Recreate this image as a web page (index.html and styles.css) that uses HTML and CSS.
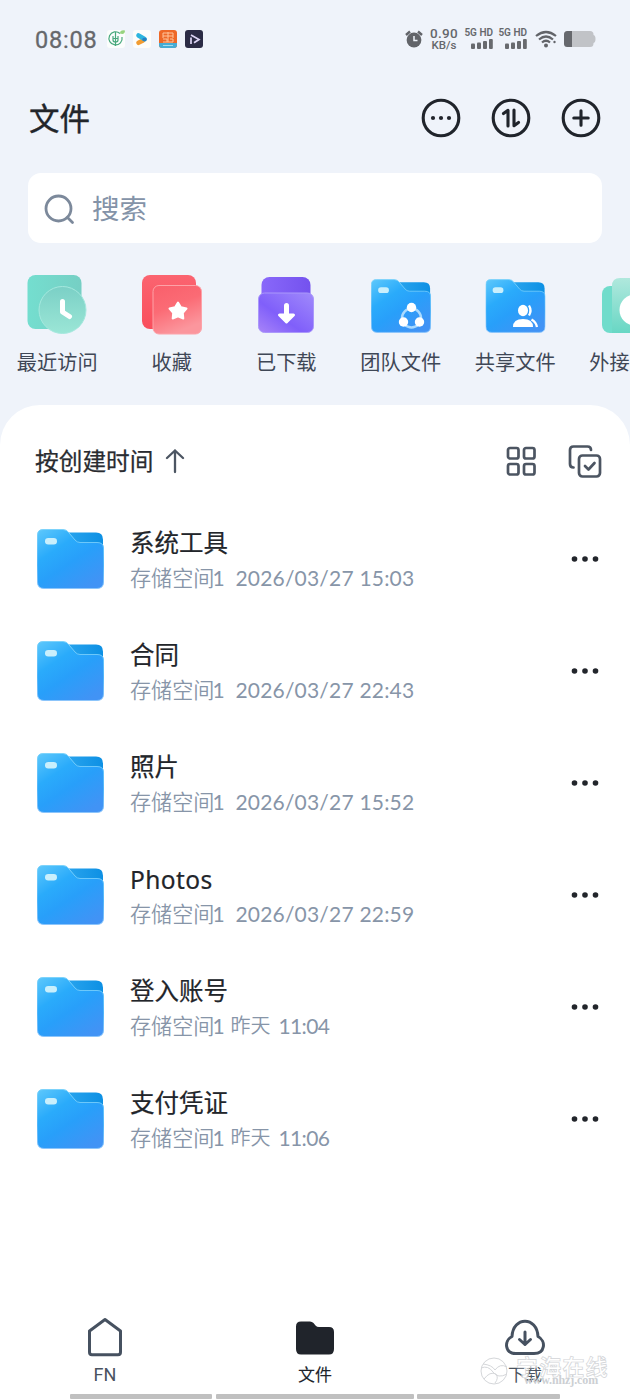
FILE: index.html
```html
<!DOCTYPE html>
<html lang="zh-CN">
<head>
<meta charset="utf-8">
<title>文件</title>
<link rel="stylesheet" href="styles.css">
</head>
<body>
<svg class="defs" width="0" height="0">
  <defs>
    <linearGradient id="front" x1="0" y1="0" x2=".75" y2="1"><stop offset="0" stop-color="#5ec8fb"/><stop offset=".35" stop-color="#2aabfb"/><stop offset=".6" stop-color="#289ffa"/><stop offset="1" stop-color="#4193f5"/></linearGradient>
    <linearGradient id="edge" x1="0" y1="0" x2="0" y2="1"><stop offset="0" stop-color="#7dd3fb"/><stop offset=".6" stop-color="#50b5fa"/><stop offset="1" stop-color="#8cc5fb"/></linearGradient>
    <linearGradient id="back" x1="0" y1="0" x2="1" y2="0"><stop offset="0" stop-color="#2aa5ee"/><stop offset="1" stop-color="#0d90e4"/></linearGradient>
    <linearGradient id="teal" x1="0" y1="0" x2="1" y2="0"><stop offset="0" stop-color="#74decf"/><stop offset="1" stop-color="#76cfc4"/></linearGradient>
    <linearGradient id="mint" x1="0" y1="0" x2="0" y2="1"><stop offset="0" stop-color="#7bd0c6"/><stop offset="1" stop-color="#9be6d6"/></linearGradient>
    <linearGradient id="red" x1="0" y1="0" x2="0" y2="1"><stop offset="0" stop-color="#fb6470"/><stop offset="1" stop-color="#f94e5c"/></linearGradient>
    <linearGradient id="pink" x1="0" y1="0" x2=".4" y2="1"><stop offset="0" stop-color="#f95f6b"/><stop offset=".5" stop-color="#fb6b75"/><stop offset="1" stop-color="#fb969d"/></linearGradient>
    <linearGradient id="violet" x1="0" y1="0" x2="1" y2="0"><stop offset="0" stop-color="#8968fa"/><stop offset="1" stop-color="#7452ee"/></linearGradient>
    <linearGradient id="lilac" x1="0" y1="1" x2="1" y2="0"><stop offset="0" stop-color="#a884f8"/><stop offset=".4" stop-color="#805ffa"/><stop offset="1" stop-color="#a08afb"/></linearGradient>
    <linearGradient id="drive" x1="0" y1="0" x2="0" y2="1"><stop offset="0" stop-color="#b0e8dd"/><stop offset="1" stop-color="#68d7c4"/></linearGradient>
    <symbol id="folder" viewBox="0 0 67 60">
      <path d="M28 3.500H59Q66 3.500 66 10.500V25H28Z" fill="url(#back)"/>
      <path d="M6 .5H26Q29.500 .5 31.500 3.300L38 11Q40 13.500 43 13.500H60Q66.500 13.500 66.500 19V53Q66.500 59.500 60 59.500H7Q.5 59.500 .5 53V6Q.5 .5 6 .5Z" fill="url(#front)" stroke="url(#edge)"/>
      <rect x="8" y="9" width="12" height="6.500" rx="3.200" fill="#c9effc"/>
    </symbol>
    <symbol id="more" viewBox="0 0 28 8"><g fill="#22252b"><circle cx="3.500" cy="4" r="2.800"/><circle cx="14" cy="4" r="2.800"/><circle cx="24.500" cy="4" r="2.800"/></g></symbol>
    <symbol id="signal" viewBox="0 0 22 10"><g fill="#686a6e"><rect y="4.500" width="4" height="5.500" rx="1"/><rect x="6" y="3.500" width="4" height="6.500" rx="1"/><rect x="12" y="2" width="4" height="8" rx="1"/><rect x="18" width="3.800" height="10" rx="1"/></g></symbol>
  </defs>
</svg>
<div class="phone">
  <header class="status">
    <time class="clock">08:08</time>
    <svg class="apps" width="98" height="20" viewBox="0 0 98 20">
      <rect x="0" y="1" width="18" height="18" rx="3" fill="#fbfdfc"/>
      <g fill="none" stroke="#48a97d" stroke-width="1.200"><path d="M13 4.500A6.600 6.600 0 1 0 15 8"/><path d="M8.500 3V8M6 7v4q0 2 2.500 2t2.500-2V7M8.500 8v9M6 9.500h5"/></g>
      <path d="M13 4.500q0-4 5-3Q18 6 13 4.500Z" fill="#97d47f"/>
      <rect x="26" y="1" width="18" height="18" rx="3" fill="#fdfdfb"/>
      <path d="M31.500 13.800 36 11.500" stroke="#f29c31" stroke-width="4.600" stroke-linecap="round"/><path d="M31.500 6.500 37.500 10" stroke="#2eb5df" stroke-width="4.600" stroke-linecap="round"/><path d="M37 10.500H38" stroke="#2881c2" stroke-width="3.500" stroke-linecap="round"/>
      <rect x="52" y="1" width="18" height="18" rx="3" fill="#ee6827"/><path d="M52 14h18v2q0 3-3 3H55q-3 0-3-3Z" fill="#45acd5"/>
      <path d="M56 4h10M56 7h10M56 4v5M61 3v10M66 4v5M56 10h4v3M63 10h3v3M56 13h10" stroke="#ffc39a" fill="none"/><path d="M56 16.500h10" stroke="#a3dced"/>
      <rect x="78" y="1" width="18" height="18" rx="3" fill="#2b2b45"/><path d="M84 15V8.500M84 6 92 10.500 87 13.800" stroke="#ddd5f5" stroke-width="1.700" fill="none"/>
    </svg>
    <span class="spacer"></span>
    <svg class="alarm" width="18" height="18" viewBox="0 0 18 18"><circle cx="9" cy="10" r="7.400" fill="#626469"/><path d="M1 5 5 1.500M17 5 13 1.500" stroke="#626469" stroke-width="2.400"/><path d="M9 6v4.500h3.500" fill="none" stroke="#eff3fa" stroke-width="1.500"/></svg>
    <div class="speed"><b>0.90</b><span>KB/s</span></div>
    <div class="sim"><span>5G HD</span><svg width="22" height="10"><use href="#signal"/></svg></div>
    <div class="sim second"><span>5G HD</span><svg width="22" height="10"><use href="#signal"/></svg></div>
    <svg class="wifi" width="22" height="18" viewBox="0 0 22 18"><g fill="none" stroke="#626469" stroke-width="2.200"><path d="M1 6Q11-2 21 6M4 9.500Q11 3.500 18 9.500M7 12.500q4-3.500 8 0"/></g><circle cx="11" cy="15.500" r="2" fill="#626469"/><circle cx="19.500" cy="12" r="1.200" fill="#626469"/></svg>
    <svg class="battery" width="32" height="16" viewBox="0 0 32 16"><rect width="29.500" height="16" rx="3.500" fill="#c1c3c7"/><path d="M29 4q2.500 0 2.500 4T29 12Z" fill="#c1c3c7"/><path d="M8 0H3.500Q0 0 0 3.500v9Q0 16 3.500 16H8Z" fill="#66686d"/></svg>
  </header>
  <div class="heading">
    <h1>文件</h1>
    <div class="actions">
      <svg width="40" height="40" viewBox="0 0 40 40"><circle cx="20" cy="20" r="17.800"/><g class="solid"><circle cx="12" cy="20" r="2.100"/><circle cx="20" cy="20" r="2.100"/><circle cx="28" cy="20" r="2.100"/></g></svg>
      <svg width="40" height="40" viewBox="0 0 40 40"><circle cx="20" cy="20" r="17.800"/><path d="M12.500 15.500 17 12.300V28M23 12V27.700L27.500 24.500"/></svg>
      <svg width="40" height="40" viewBox="0 0 40 40"><circle cx="20" cy="20" r="17.800"/><path d="M12.800 20H27.200M20 12.800V27.200"/></svg>
    </div>
  </div>
  <div class="search"><svg width="32" height="32" viewBox="0 0 32 32"><circle cx="14.500" cy="15.500" r="12.500"/><path d="M23.500 24.500 28.500 29.500"/></svg><span>搜索</span></div>
  <nav class="shortcuts">
    <div class="shortcut"><svg width="62" height="62" viewBox="0 0 62 62"><rect x="1.500" y="1" width="54" height="54" rx="8" fill="url(#teal)"/><circle cx="36.500" cy="36" r="23.500" fill="url(#mint)" stroke="#a5e8de"/><path d="M36.500 27.500V38L43.500 42.500" fill="none" stroke="#fff" stroke-width="5" stroke-linecap="round" stroke-linejoin="round"/></svg><span>最近访问</span></div>
    <div class="shortcut"><svg width="62" height="62" viewBox="0 0 62 62"><rect x="1" y="1" width="54" height="54" rx="8" fill="url(#red)"/><rect x="12" y="11.500" width="48.500" height="48.500" rx="6" fill="url(#pink)" stroke="#fda2a8"/><path d="M37 28.500 39.900 33.300 45.500 34.500 41.800 38.900 42.300 44.500 37 42.400 31.700 44.500 32.200 38.900 28.500 34.500 34.100 33.300Z" fill="#fff" stroke="#fff" stroke-width="2" stroke-linejoin="round"/></svg><span>收藏</span></div>
    <div class="shortcut"><svg width="62" height="62" viewBox="0 0 62 62"><rect x="6.500" y="3" width="49" height="35" rx="8" fill="url(#violet)"/><rect x="3.500" y="19" width="55" height="39.500" rx="6" fill="url(#lilac)" stroke="#aa98fb"/><path d="M31.500 31.500V42" stroke="#fff" stroke-width="5" stroke-linecap="round"/><path d="M24.500 41H38.500L31.500 48Z" fill="#fff" stroke="#fff" stroke-width="3" stroke-linejoin="round"/></svg><span>已下载</span></div>
    <div class="shortcut"><svg width="62" height="62" viewBox="0 0 62 62"><use href="#folder" x="1" y="5" width="60" height="54"/><circle cx="41.500" cy="44" r="9.500" fill="none" stroke="#a9daff" stroke-width="2.500"/><g fill="#fff"><circle cx="41.500" cy="33.500" r="4.700"/><circle cx="33.500" cy="48" r="4.700"/><circle cx="49.500" cy="48" r="4.700"/></g></svg><span>团队文件</span></div>
    <div class="shortcut"><svg width="62" height="62" viewBox="0 0 62 62"><use href="#folder" x="1.500" y="5" width="60" height="54"/><g fill="#fff"><ellipse cx="39" cy="36.500" rx="5" ry="5.800"/><path d="M29 53Q29 45 39 45T49 53Z"/></g><path d="M45 31.500q3 5 0 10M47.500 45.500Q52 48 53 53" fill="none" stroke="#fff" stroke-width="2.300"/></svg><span>共享文件</span></div>
    <div class="shortcut"><svg width="62" height="62" viewBox="0 0 62 62"><rect x="3" y="12" width="50" height="47" rx="8" fill="#70dccb"/><path d="M13 59V12Q13 4 21 4H60V59Z" fill="url(#drive)"/><circle cx="36" cy="36" r="15.500" fill="#fff"/></svg><span>外接存储</span></div>
  </nav>
  <main class="sheet">
    <div class="sort"><strong>按创建时间</strong><svg class="up" width="20" height="26" viewBox="0 0 20 26"><path d="M10 23V1.500M2 9 10 1.500 18 9"/></svg><span class="spacer"></span>
      <svg class="grid" width="31" height="31" viewBox="0 0 31 31"><rect x="2" y="2" width="10.500" height="10.500" rx="2"/><rect x="18" y="2" width="10.500" height="10.500" rx="2"/><rect x="2" y="18" width="10.500" height="10.500" rx="2"/><rect x="18" y="18" width="10.500" height="10.500" rx="2"/></svg>
      <svg class="select" width="34" height="34" viewBox="0 0 34 34"><path d="M5.500 22.500Q2 22.500 2 19V5Q2 1.500 5.500 1.500H19.500Q23 1.500 23 5"/><rect x="11" y="10.500" width="21" height="21" rx="3.500"/><path d="M17 21 20.500 24.500 26.500 18"/></svg></div>
    <ul class="files">
      <li><svg class="folder" width="67" height="60"><use href="#folder"/></svg><div class="info"><h2>系统工具</h2><p>存储空间<i>1</i><time class="date">2026/03/27 15:03</time></p></div><svg class="more" width="28" height="8"><use href="#more"/></svg></li>
      <li><svg class="folder" width="67" height="60"><use href="#folder"/></svg><div class="info"><h2>合同</h2><p>存储空间<i>1</i><time class="date">2026/03/27 22:43</time></p></div><svg class="more" width="28" height="8"><use href="#more"/></svg></li>
      <li><svg class="folder" width="67" height="60"><use href="#folder"/></svg><div class="info"><h2>照片</h2><p>存储空间<i>1</i><time class="date">2026/03/27 15:52</time></p></div><svg class="more" width="28" height="8"><use href="#more"/></svg></li>
      <li><svg class="folder" width="67" height="60"><use href="#folder"/></svg><div class="info"><h2 class="latin">Photos</h2><p>存储空间<i>1</i><time class="date">2026/03/27 22:59</time></p></div><svg class="more" width="28" height="8"><use href="#more"/></svg></li>
      <li><svg class="folder" width="67" height="60"><use href="#folder"/></svg><div class="info"><h2>登入账号</h2><p>存储空间<i>1</i><span class="day">昨天</span><time class="hour">11:04</time></p></div><svg class="more" width="28" height="8"><use href="#more"/></svg></li>
      <li><svg class="folder" width="67" height="60"><use href="#folder"/></svg><div class="info"><h2>支付凭证</h2><p>存储空间<i>1</i><span class="day">昨天</span><time class="hour">11:06</time></p></div><svg class="more" width="28" height="8"><use href="#more"/></svg></li>
    </ul>
  </main>
  <nav class="tabs">
    <div class="tab"><svg width="42" height="42" viewBox="0 0 42 42"><path class="line" d="M21 3.500 36.500 15V36Q36.500 38.800 34 38.800H8Q5.500 38.800 5.500 36V15Z"/></svg><span class="fn">FN</span></div>
    <div class="tab active"><svg width="42" height="42" viewBox="0 0 42 42"><path d="M7 5.500H16Q18 5.500 19.500 7L21.500 9.500Q23 11 25 11H35Q40 11 40 16V33Q40 38.500 35 38.500H7Q2 38.500 2 33V10.500Q2 5.500 7 5.500Z" fill="#20242b"/></svg><span>文件</span></div>
    <div class="tab"><svg width="42" height="42" viewBox="0 0 42 42"><path class="line" d="M12 37.500C1 37.500-.5 25 8 20.500C9 0 33 0 34 20.500C42.500 25 41 37.500 30 37.500Z"/><path class="line" d="M21 16V28.500M15.500 23.500 21 28.500 26.500 23.500"/></svg><span>下载</span></div>
  </nav>
  <div class="segments"><i></i><i></i><i></i></div>
  <div class="watermark">
    <svg width="28" height="28" viewBox="0 0 28 28"><circle cx="14" cy="14" r="13"/><path d="M1 11Q8 8 13 15T27 17M3 7q9 1 12 6 5-7 12-3M4 22q6-8 12-5 3 4-1 9"/></svg>
    <div><b>宁海在线</b><span>www.nhzj.com</span></div>
  </div>
</div>
</body>
</html>
```
FILE: styles.css
```css
* { box-sizing: border-box; }
body { margin: 0; background: #eff3fa; font-family: "Noto Sans CJK SC", sans-serif; color: #22252a; }
h1, h2, p, ul { margin: 0; padding: 0; }
i { font-style: normal; }
svg { display: block; flex: none; }
.defs { position: absolute; }
.phone { position: relative; width: 630px; height: 1400px; overflow: hidden; display: flex; flex-direction: column; background: #eff3fa; }
.spacer { flex: 1; }

.status { height: 78px; flex: none; display: flex; align-items: center; padding: 0 34px 0 35px; color: #66686c; }
.clock { width: 63px; padding-top: 1px; font: 400 23.500px/26px Roboto, sans-serif; letter-spacing: .8px; white-space: nowrap; -webkit-text-stroke: .3px; }
.apps { margin-left: 9px; }
.alarm { margin-right: 7px; }
.speed { width: 28px; margin-right: 6px; display: flex; flex-direction: column; align-items: center; font-family: Roboto, sans-serif; white-space: nowrap; }
.speed b { font-size: 13.500px; font-weight: 500; line-height: 12px; letter-spacing: .3px; }
.speed span { font-size: 11.500px; font-weight: 500; line-height: 12px; }
.sim { width: 29px; margin-right: 5px; display: flex; flex-direction: column; align-items: flex-end; gap: 2px; padding-bottom: 2px; font: 600 10px/9px Roboto, sans-serif; white-space: nowrap; }
.second { margin-right: 8px; }
.wifi { margin-right: 7px; }

.heading { height: 80px; flex: none; display: flex; align-items: center; justify-content: space-between; padding: 0 29px; }
h1 { font-size: 30.500px; line-height: 40px; padding-bottom: 3px; font-weight: 400; -webkit-text-stroke: .4px; }
.actions { display: flex; gap: 30px; }
.actions svg { fill: none; stroke: #20242b; stroke-width: 3.100; stroke-linecap: round; stroke-linejoin: round; }
.actions .solid { fill: #20242b; stroke: none; }

.search { height: 70px; margin: 15px 28px 0; flex: none; display: flex; align-items: center; gap: 16px; padding: 1px 16px 0; border-radius: 13px; background: #fff; font-size: 27.500px; line-height: 40px; color: #8493a8; }
.search span { padding-bottom: 3px; }
.search svg { fill: none; stroke: #7c899b; stroke-width: 2.800; stroke-linecap: round; }

.shortcuts { width: 690px; height: 162px; flex: none; display: flex; padding-top: 31px; }
.shortcut { width: 114.500px; flex: none; display: flex; flex-direction: column; align-items: center; font-size: 20.200px; line-height: 28px; color: #3f4756; gap: 12px; }

.sheet { height: 905px; flex: none; background: #fff; border-radius: 40px 40px 0 0; }
.sort { height: 98px; padding: 15px 28px 0 35px; display: flex; align-items: center; }
.sort strong { font-size: 23.700px; line-height: 34px; padding-bottom: 3px; font-weight: 400; -webkit-text-stroke: .25px; color: #292b30; }
.up { margin-left: 12px; }
.sort svg { fill: none; stroke: #4c5562; stroke-width: 2.700; stroke-linejoin: round; stroke-linecap: round; }
.sort .up { stroke-width: 2.300; }
.grid { margin-right: 31px; }
.sort .select { margin-right: .5px; }

.files { list-style: none; }
.files li { height: 112px; display: flex; align-items: center; padding: 0 31.500px 0 37px; }
.folder { margin-top: -1px; }
.info { flex: 1; margin-left: 26px; }
.info h2 { font-size: 24.500px; line-height: 36px; height: 35px; font-weight: 400; -webkit-text-stroke: .2px; }
.info .latin { font-family: "Noto Sans", sans-serif; font-size: 24.500px; line-height: 40px; letter-spacing: .4px; }
.info p { display: flex; font-size: 21.100px; line-height: 36px; height: 35px; color: #8795a8; white-space: nowrap; font-weight: 350; }
.info p i { width: 10px; margin-left: -2px; margin-right: 1px; }
.info p i, .date, .hour { font-family: Lato, sans-serif; font-weight: 400; line-height: 37px; font-size: 21px; }
.date { margin-left: 12px; letter-spacing: .2px; }
.day { margin-left: 7px; font-size: 20px; }
.hour { margin-left: 8px; letter-spacing: -.6px; }

.tabs { height: 81px; flex: none; display: grid; grid-template-columns: repeat(3, 210px); background: #fff; padding-top: 6px; }
.tab { display: flex; flex-direction: column; align-items: center; gap: 3px; font-size: 17px; line-height: 26px; color: #4a5360; }
.tab .line { fill: none; stroke: #465160; stroke-width: 3; stroke-linecap: round; stroke-linejoin: round; }
.tab.active { color: #20242b; -webkit-text-stroke: .1px; }
.tab .fn { padding-top: 1px; font-family: Roboto, sans-serif; font-size: 18px; }
.segments { height: 9px; flex: none; display: grid; grid-template-columns: 142px 198px 143px; column-gap: 3.500px; padding: 3px 70px 1px; background: #fff; }
.segments i { background: #c0c0c0; border-radius: 1px; }

.watermark { position: absolute; left: 480px; top: 1357px; display: flex; gap: 8px; color: rgba(255, 255, 255, .6); }
.watermark svg { fill: rgba(255, 255, 255, .3); stroke: #d5d7da; stroke-width: 1; }
.watermark div { display: flex; flex-direction: column; }
.watermark b { font-size: 22px; line-height: 16px; font-weight: 700; -webkit-text-stroke: .7px #d2d4d7; letter-spacing: 1.200px; }
.watermark span { margin-left: 8px; font: 700 12px/15px "Liberation Serif", serif; color: #cccfd3; letter-spacing: -.1px; }
```
